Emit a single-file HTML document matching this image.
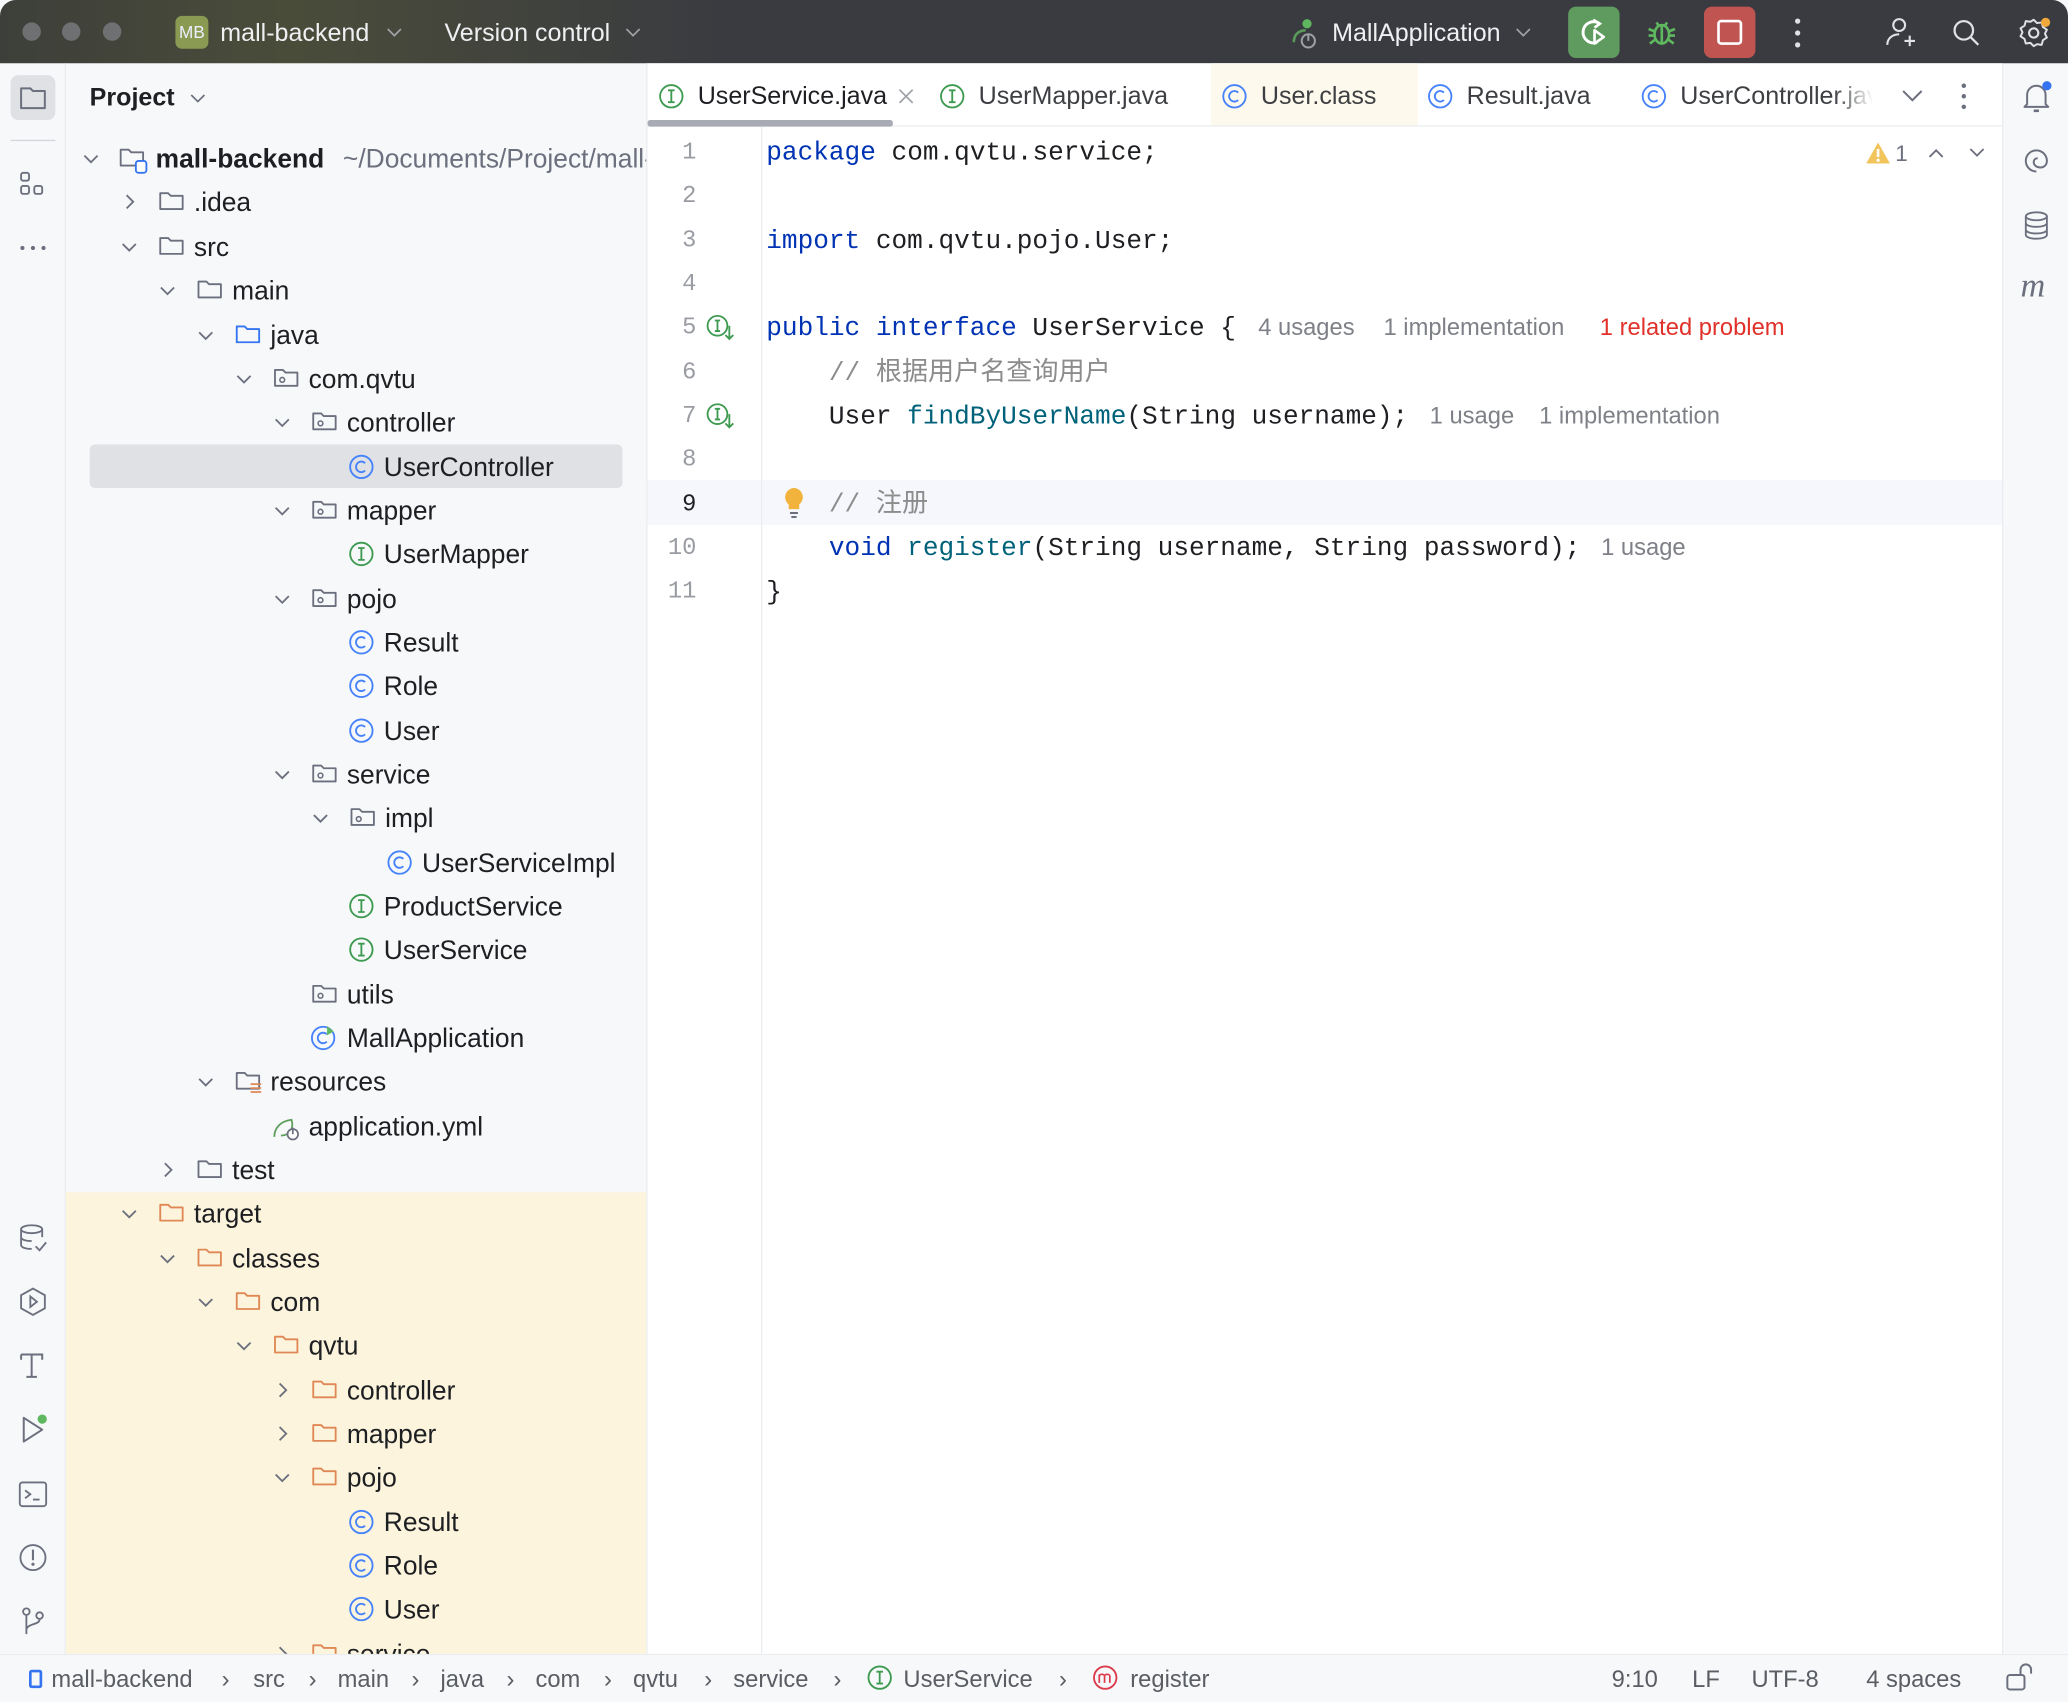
<!DOCTYPE html>
<html><head><meta charset="utf-8"><style>
*{box-sizing:border-box;margin:0;padding:0}
html,body{width:2068px;height:1702px;overflow:hidden;background:#f7f8fa}
#w{position:absolute;left:0;top:0;width:1568px;height:1290px;overflow:hidden;transform:scale(1.31888);transform-origin:0 0;font-family:"Liberation Sans","Noto Sans CJK SC",sans-serif;color:#1e1f22}
.a{position:absolute}
#tb{left:0;top:0;width:1568px;height:48px;background:linear-gradient(90deg,#3d3f3a 0%,#4a4c3a 14%,#393b40 35%,#393b40 100%);border-radius:12px 12px 0 0}
.tl{width:14px;height:14px;border-radius:50%;background:#6e7072;top:17px}
.tt{color:#eef0f2;font-size:19px;top:15px}
.r{position:absolute;height:33px;left:0;width:440px;font-size:20px;line-height:33px;white-space:nowrap}
.r svg{position:absolute;top:7px}
.r span{position:absolute;top:2px}
.code{font-family:"Liberation Mono","Noto Sans CJK SC",monospace;font-size:19.8px;white-space:pre;line-height:33px}
.ln{position:absolute;left:491px;width:37px;text-align:right;font-family:"Liberation Mono",monospace;font-size:18px;color:#9a9ca3;line-height:33px}
.kw{color:#0033b3}.mt{color:#00627a}.cm{color:#8c8c8c}
.h{position:absolute;font-family:"Liberation Sans",sans-serif;font-size:18px;color:#7e8087;white-space:nowrap}
.tab{top:63px;font-size:19px;color:#3d3f43;white-space:nowrap}
.sb{top:1263px;font-size:18px;color:#5a5d63;white-space:nowrap}
.li{left:13px;width:24px;height:24px}
</style></head><body><div id="w">
<svg width="0" height="0" style="position:absolute"><defs>
<g id="fo"><path d="M1.5 3.5h6l2 2h9v10h-17z" fill="none" stroke="#6c707e" stroke-width="1.4" stroke-linejoin="round"/></g>
<g id="fb"><path d="M1.5 3.5h6l2 2h9v10h-17z" fill="none" stroke="#3574f0" stroke-width="1.4" stroke-linejoin="round"/></g>
<g id="fy"><path d="M1.5 3.5h6l2 2h9v10h-17z" fill="none" stroke="#e08855" stroke-width="1.4" stroke-linejoin="round"/></g>
<g id="pk"><path d="M1.5 3.5h6l2 2h9v10h-17z" fill="none" stroke="#6c707e" stroke-width="1.4" stroke-linejoin="round"/><circle cx="7" cy="11" r="1.8" fill="none" stroke="#6c707e" stroke-width="1.2"/></g>
<g id="cc"><circle cx="10" cy="10" r="8.5" fill="none" stroke="#4682fa" stroke-width="1.4"/><path d="M12.8 7.2a4 4 0 1 0 0 5.6" fill="none" stroke="#4682fa" stroke-width="1.4"/></g>
<g id="ii"><circle cx="10" cy="10" r="8.5" fill="none" stroke="#3d9a50" stroke-width="1.4"/><path d="M7.5 5.5h5M10 5.5v9M7.5 14.5h5" fill="none" stroke="#3d9a50" stroke-width="1.4"/></g>
<g id="cd"><path d="M5 8l5 5 5-5" fill="none" stroke="#6c707e" stroke-width="1.4"/></g>
<g id="cr"><path d="M8 5l5 5-5 5" fill="none" stroke="#6c707e" stroke-width="1.4"/></g>
</defs></svg>

<div id="tb" class="a">
<div class="a tl" style="left:17px"></div><div class="a tl" style="left:47px"></div><div class="a tl" style="left:78px"></div>
<div class="a" style="left:133px;top:12px;width:25px;height:25px;border-radius:5px;background:#8b9a52;color:#eef;font-size:13px;line-height:25px;text-align:center">MB</div>
<div class="a tt" style="left:167px">mall-backend</div>
<svg class="a" style="left:292px;top:17px" width="14" height="14"><path d="M2 5l5 5 5-5" fill="none" stroke="#9ea1a6" stroke-width="1.3"/></svg>
<div class="a tt" style="left:337px">Version control</div>
<svg class="a" style="left:473px;top:17px" width="14" height="14"><path d="M2 5l5 5 5-5" fill="none" stroke="#9ea1a6" stroke-width="1.3"/></svg>
<svg class="a" style="left:976px;top:12px" width="28" height="26"><path d="M5 20c0-6 4-9 9-9" fill="none" stroke="#5a9a5a" stroke-width="2"/><circle cx="15" cy="6" r="3.5" fill="#5fb85f"/><circle cx="16" cy="19" r="5" fill="none" stroke="#9ea1a6" stroke-width="1.5"/><path d="M16 14v5" stroke="#9ea1a6" stroke-width="1.5"/></svg>
<div class="a tt" style="left:1010px">MallApplication</div>
<svg class="a" style="left:1148px;top:17px" width="14" height="14"><path d="M2 5l5 5 5-5" fill="none" stroke="#9ea1a6" stroke-width="1.3"/></svg>
<div class="a" style="left:1189px;top:5px;width:39px;height:39px;border-radius:6px;background:#5f9b5f"></div>
<svg class="a" style="left:1195px;top:11px" width="28" height="28"><path d="M18 7a8 8 0 1 0 -2 14" fill="none" stroke="#fff" stroke-width="2.2"/><path d="M13 4l5 3-4 3" fill="none" stroke="#fff" stroke-width="2"/><path d="M14 12l7 5-7 5z" fill="none" stroke="#fff" stroke-width="2" stroke-linejoin="round"/></svg>
<svg class="a" style="left:1247px;top:11px" width="26" height="26"><ellipse cx="13" cy="15" rx="5.5" ry="7" fill="none" stroke="#5fb85f" stroke-width="2"/><path d="M13 8v14M3 11l5 2M23 11l-5 2M3 16h4M23 16h-4M4 22l4-3M22 22l-4-3M9 6l2 3M17 6l-2 3" stroke="#5fb85f" stroke-width="2" fill="none"/></svg>
<div class="a" style="left:1292px;top:5px;width:39px;height:39px;border-radius:6px;background:#c05450"></div>
<div class="a" style="left:1302px;top:15px;width:19px;height:19px;border:2.5px solid #fff;border-radius:3px"></div>
<svg class="a" style="left:1356px;top:12px" width="14" height="26"><circle cx="7" cy="4" r="2" fill="#dfe1e5"/><circle cx="7" cy="13" r="2" fill="#dfe1e5"/><circle cx="7" cy="22" r="2" fill="#dfe1e5"/></svg>
<svg class="a" style="left:1428px;top:12px" width="26" height="26"><circle cx="12" cy="7" r="4.5" fill="none" stroke="#dfe1e5" stroke-width="1.6"/><path d="M3 22c0-5 4-8 9-8M16 19h8M20 15v8" fill="none" stroke="#dfe1e5" stroke-width="1.6"/></svg>
<svg class="a" style="left:1479px;top:13px" width="24" height="24"><circle cx="10" cy="10" r="7" fill="none" stroke="#dfe1e5" stroke-width="1.7"/><path d="M15 15l6 6" stroke="#dfe1e5" stroke-width="1.7"/></svg>
<svg class="a" style="left:1530px;top:12px" width="26" height="26"><circle cx="12" cy="13" r="3.5" fill="none" stroke="#dfe1e5" stroke-width="1.6"/><path d="M12 3l2.5 2.5 3.5-.5 1 3.5 3 2-1.5 3 1.5 3-3 2-1 3.5-3.5-.5L12 23l-2.5-2.5-3.5.5-1-3.5-3-2 1.5-3-1.5-3 3-2 1-3.5 3.5.5z" fill="none" stroke="#dfe1e5" stroke-width="1.5" stroke-linejoin="round"/><circle cx="21" cy="5" r="3.5" fill="#f2a93b"/></svg>
</div>

<!-- left toolbar -->
<div class="a" style="left:49px;top:48px;width:1px;height:1206px;background:#ebecf0"></div>
<div class="a" style="left:8px;top:57px;width:34px;height:34px;border-radius:6px;background:#dfe1e5"></div>
<svg class="a" style="left:14px;top:63px" width="22" height="22"><path d="M2 4h7l2 2h9v13H2z" fill="none" stroke="#6c707e" stroke-width="1.5" stroke-linejoin="round"/></svg>
<div class="a" style="left:8px;top:106px;width:34px;height:1px;background:#d3d5db"></div>
<svg class="a li" style="top:128px"><rect x="3" y="3" width="6" height="6" rx="1.5" fill="none" stroke="#6c707e" stroke-width="1.4"/><rect x="3" y="13" width="6" height="6" rx="1.5" fill="none" stroke="#6c707e" stroke-width="1.4"/><rect x="13" y="13" width="6" height="6" rx="1.5" fill="none" stroke="#6c707e" stroke-width="1.4"/></svg>
<svg class="a li" style="top:176px"><circle cx="4" cy="12" r="1.6" fill="#6c707e"/><circle cx="12" cy="12" r="1.6" fill="#6c707e"/><circle cx="20" cy="12" r="1.6" fill="#6c707e"/></svg>
<svg class="a li" style="top:927px"><ellipse cx="11" cy="5" rx="8" ry="3" fill="none" stroke="#6c707e" stroke-width="1.4"/><path d="M3 5v12c0 2 4 3 8 3M19 5v6M3 11c0 2 4 3 8 3M14 18l3 3 5-6" fill="none" stroke="#6c707e" stroke-width="1.4"/></svg>
<svg class="a li" style="top:975px"><path d="M12 2l9 5v10l-9 5-9-5V7z" fill="none" stroke="#6c707e" stroke-width="1.4"/><path d="M10 8l5 4-5 4z" fill="none" stroke="#6c707e" stroke-width="1.4"/></svg>
<svg class="a li" style="top:1023px"><path d="M3 4h16v4M11 4v17M7 21h8M3 4v4" fill="none" stroke="#6c707e" stroke-width="1.5"/></svg>
<svg class="a li" style="top:1072px"><path d="M5 3l14 9-14 9z" fill="none" stroke="#6c707e" stroke-width="1.5" stroke-linejoin="round"/><circle cx="19" cy="4" r="3.5" fill="#5fb85f"/></svg>
<svg class="a li" style="top:1121px"><rect x="2" y="3" width="20" height="18" rx="2" fill="none" stroke="#6c707e" stroke-width="1.4"/><path d="M6 9l4 3-4 3M12 16h5" fill="none" stroke="#6c707e" stroke-width="1.4"/></svg>
<svg class="a li" style="top:1169px"><circle cx="12" cy="12" r="9.5" fill="none" stroke="#6c707e" stroke-width="1.4"/><path d="M12 6v8" stroke="#6c707e" stroke-width="1.6"/><circle cx="12" cy="17" r="1.2" fill="#6c707e"/></svg>
<svg class="a li" style="top:1217px"><circle cx="7" cy="5" r="2.5" fill="none" stroke="#6c707e" stroke-width="1.4"/><circle cx="17" cy="8" r="2.5" fill="none" stroke="#6c707e" stroke-width="1.4"/><path d="M7 8v14M17 11c0 4-10 3-10 8" fill="none" stroke="#6c707e" stroke-width="1.4"/></svg>

<!-- project panel -->
<div class="a" style="left:68px;top:64px;font-size:19px;font-weight:bold">Project</div>
<svg class="a" style="left:143px;top:67px" width="14" height="14"><path d="M2 5l5 5 5-5" fill="none" stroke="#6c707e" stroke-width="1.3"/></svg>
<div class="a" style="left:490px;top:48px;width:1px;height:1206px;background:#ebecf0"></div>
<div class="a" style="left:50px;top:904px;width:440px;height:350px;background:#fcf4dc"></div>
<div class="a" style="left:68px;top:337px;width:404px;height:33px;border-radius:4px;background:#dfe1e5"></div>
<div class="a" style="left:50px;top:100px;width:440px;height:1154px;overflow:hidden">
<div style="position:absolute;left:-50px;top:-100px;width:490px;height:1400px">
<div class="r" style="top:103px"><svg class="a" style="left:59px" width="20" height="20"><use href="#cd"/></svg><svg class="a" style="left:90px" width="22" height="22"><use href="#fo"/><rect x="13" y="12" width="8" height="9" rx="2" fill="#fff" stroke="#3574f0" stroke-width="1.4"/></svg><span style="left:118px;font-weight:bold">mall-backend</span><span style="left:260px;color:#6c707e">~/Documents/Project/mall-backend</span></div>
<div class="r" style="top:136px"><svg style="left:88px" width="20" height="20"><use href="#cr"/></svg><svg style="left:120px" width="21" height="20"><use href="#fo"/></svg><span style="left:147px">.idea</span></div>
<div class="r" style="top:170px"><svg style="left:88px" width="20" height="20"><use href="#cd"/></svg><svg style="left:120px" width="21" height="20"><use href="#fo"/></svg><span style="left:147px">src</span></div>
<div class="r" style="top:203px"><svg style="left:117px" width="20" height="20"><use href="#cd"/></svg><svg style="left:149px" width="21" height="20"><use href="#fo"/></svg><span style="left:176px">main</span></div>
<div class="r" style="top:237px"><svg style="left:146px" width="20" height="20"><use href="#cd"/></svg><svg style="left:178px" width="21" height="20"><use href="#fb"/></svg><span style="left:205px">java</span></div>
<div class="r" style="top:270px"><svg style="left:175px" width="20" height="20"><use href="#cd"/></svg><svg style="left:207px" width="21" height="20"><use href="#pk"/></svg><span style="left:234px">com.qvtu</span></div>
<div class="r" style="top:303px"><svg style="left:204px" width="20" height="20"><use href="#cd"/></svg><svg style="left:236px" width="21" height="20"><use href="#pk"/></svg><span style="left:263px">controller</span></div>
<div class="r" style="top:337px"><svg style="left:264px" width="20" height="20"><use href="#cc"/></svg><span style="left:291px">UserController</span></div>
<div class="r" style="top:370px"><svg style="left:204px" width="20" height="20"><use href="#cd"/></svg><svg style="left:236px" width="21" height="20"><use href="#pk"/></svg><span style="left:263px">mapper</span></div>
<div class="r" style="top:403px"><svg style="left:264px" width="20" height="20"><use href="#ii"/></svg><span style="left:291px">UserMapper</span></div>
<div class="r" style="top:437px"><svg style="left:204px" width="20" height="20"><use href="#cd"/></svg><svg style="left:236px" width="21" height="20"><use href="#pk"/></svg><span style="left:263px">pojo</span></div>
<div class="r" style="top:470px"><svg style="left:264px" width="20" height="20"><use href="#cc"/></svg><span style="left:291px">Result</span></div>
<div class="r" style="top:503px"><svg style="left:264px" width="20" height="20"><use href="#cc"/></svg><span style="left:291px">Role</span></div>
<div class="r" style="top:537px"><svg style="left:264px" width="20" height="20"><use href="#cc"/></svg><span style="left:291px">User</span></div>
<div class="r" style="top:570px"><svg style="left:204px" width="20" height="20"><use href="#cd"/></svg><svg style="left:236px" width="21" height="20"><use href="#pk"/></svg><span style="left:263px">service</span></div>
<div class="r" style="top:603px"><svg style="left:233px" width="20" height="20"><use href="#cd"/></svg><svg style="left:265px" width="21" height="20"><use href="#pk"/></svg><span style="left:292px">impl</span></div>
<div class="r" style="top:637px"><svg style="left:293px" width="20" height="20"><use href="#cc"/></svg><span style="left:320px">UserServiceImpl</span></div>
<div class="r" style="top:670px"><svg style="left:264px" width="20" height="20"><use href="#ii"/></svg><span style="left:291px">ProductService</span></div>
<div class="r" style="top:703px"><svg style="left:264px" width="20" height="20"><use href="#ii"/></svg><span style="left:291px">UserService</span></div>
<div class="r" style="top:737px"><svg style="left:236px" width="21" height="20"><use href="#pk"/></svg><span style="left:263px">utils</span></div>
<div class="r" style="top:770px"><svg style="left:235px" width="22" height="22"><use href="#cc"/><path d="M13 1v7l5-3z" fill="#5fb85f"/></svg><span style="left:263px">MallApplication</span></div>
<div class="r" style="top:803px"><svg style="left:146px" width="20" height="20"><use href="#cd"/></svg><svg style="left:178px" width="22" height="20"><use href="#fo"/><path d="M12 12h8M12 15h8M12 18h8" stroke="#e08855" stroke-width="1.3"/></svg><span style="left:205px">resources</span></div>
<div class="r" style="top:837px"><svg style="left:205px" width="24" height="22"><path d="M3 18c0-7 5-12 13-13 2 6-1 12-8 12" fill="none" stroke="#5fa05f" stroke-width="1.4"/><circle cx="17" cy="16" r="4" fill="#fff" stroke="#6c707e" stroke-width="1.3"/><path d="M17 11v5" stroke="#6c707e" stroke-width="1.3"/></svg><span style="left:234px">application.yml</span></div>
<div class="r" style="top:870px"><svg style="left:117px" width="20" height="20"><use href="#cr"/></svg><svg style="left:149px" width="21" height="20"><use href="#fo"/></svg><span style="left:176px">test</span></div>
<div class="r" style="top:903px"><svg style="left:88px" width="20" height="20"><use href="#cd"/></svg><svg style="left:120px" width="21" height="20"><use href="#fy"/></svg><span style="left:147px">target</span></div>
<div class="r" style="top:937px"><svg style="left:117px" width="20" height="20"><use href="#cd"/></svg><svg style="left:149px" width="21" height="20"><use href="#fy"/></svg><span style="left:176px">classes</span></div>
<div class="r" style="top:970px"><svg style="left:146px" width="20" height="20"><use href="#cd"/></svg><svg style="left:178px" width="21" height="20"><use href="#fy"/></svg><span style="left:205px">com</span></div>
<div class="r" style="top:1003px"><svg style="left:175px" width="20" height="20"><use href="#cd"/></svg><svg style="left:207px" width="21" height="20"><use href="#fy"/></svg><span style="left:234px">qvtu</span></div>
<div class="r" style="top:1037px"><svg style="left:204px" width="20" height="20"><use href="#cr"/></svg><svg style="left:236px" width="21" height="20"><use href="#fy"/></svg><span style="left:263px">controller</span></div>
<div class="r" style="top:1070px"><svg style="left:204px" width="20" height="20"><use href="#cr"/></svg><svg style="left:236px" width="21" height="20"><use href="#fy"/></svg><span style="left:263px">mapper</span></div>
<div class="r" style="top:1103px"><svg style="left:204px" width="20" height="20"><use href="#cd"/></svg><svg style="left:236px" width="21" height="20"><use href="#fy"/></svg><span style="left:263px">pojo</span></div>
<div class="r" style="top:1137px"><svg style="left:264px" width="20" height="20"><use href="#cc"/></svg><span style="left:291px">Result</span></div>
<div class="r" style="top:1170px"><svg style="left:264px" width="20" height="20"><use href="#cc"/></svg><span style="left:291px">Role</span></div>
<div class="r" style="top:1203px"><svg style="left:264px" width="20" height="20"><use href="#cc"/></svg><span style="left:291px">User</span></div>
<div class="r" style="top:1237px"><svg style="left:204px" width="20" height="20"><use href="#cr"/></svg><svg style="left:236px" width="21" height="20"><use href="#fy"/></svg><span style="left:263px">service</span></div>
</div></div>

<!-- editor -->
<div class="a" style="left:491px;top:48px;width:1027px;height:1206px;background:#fff"></div>
<div class="a" style="left:918px;top:48px;width:157px;height:47px;background:#fdf9ec"></div>
<div class="a" style="left:491px;top:95px;width:1027px;height:1px;background:#ebecf0"></div>
<div class="a" style="left:491px;top:91px;width:186px;height:5px;border-radius:2px;background:#a8abb3"></div>
<svg class="a" style="left:499px;top:63px" width="20" height="20"><use href="#ii"/></svg><div class="a tab" style="left:529px;color:#1e1f22">UserService.java</div>
<svg class="a" style="left:680px;top:66px" width="14" height="14"><path d="M2 2l10 10M12 2L2 12" stroke="#9ea1a6" stroke-width="1.3"/></svg>
<svg class="a" style="left:712px;top:63px" width="20" height="20"><use href="#ii"/></svg><div class="a tab" style="left:742px">UserMapper.java</div>
<svg class="a" style="left:926px;top:63px" width="20" height="20"><use href="#cc"/></svg><div class="a tab" style="left:956px">User.class</div>
<svg class="a" style="left:1082px;top:63px" width="20" height="20"><use href="#cc"/></svg><div class="a tab" style="left:1112px">Result.java</div>
<svg class="a" style="left:1244px;top:63px" width="20" height="20"><use href="#cc"/></svg><div class="a tab" style="left:1274px;width:146px;overflow:hidden;-webkit-mask-image:linear-gradient(90deg,#000 80%,transparent)">UserController.java</div>
<svg class="a" style="left:1441px;top:65px" width="18" height="16"><path d="M2 4l7 7 7-7" fill="none" stroke="#6c707e" stroke-width="1.5"/></svg>
<svg class="a" style="left:1483px;top:62px" width="12" height="22"><circle cx="6" cy="3" r="1.7" fill="#6c707e"/><circle cx="6" cy="11" r="1.7" fill="#6c707e"/><circle cx="6" cy="19" r="1.7" fill="#6c707e"/></svg>

<div class="a" style="left:491px;top:364px;width:1027px;height:34px;background:#f5f7fd"></div>
<div class="a" style="left:577px;top:96px;width:1px;height:1158px;background:#ebecf0"></div>
<div class="ln" style="top:100px">1</div><div class="ln" style="top:133px">2</div><div class="ln" style="top:167px">3</div><div class="ln" style="top:200px">4</div><div class="ln" style="top:233px">5</div><div class="ln" style="top:267px">6</div><div class="ln" style="top:300px">7</div><div class="ln" style="top:333px">8</div><div class="ln" style="top:367px;color:#1e1f22">9</div><div class="ln" style="top:400px">10</div><div class="ln" style="top:433px">11</div>
<svg class="a" style="left:535px;top:238px" width="24" height="22"><circle cx="9" cy="9" r="7.5" fill="none" stroke="#3d9a50" stroke-width="1.4"/><path d="M7 5h4M9 5v8M7 13h4M18 9v10M15 16l3 3 3-3" fill="none" stroke="#3d9a50" stroke-width="1.4"/></svg>
<svg class="a" style="left:535px;top:305px" width="24" height="22"><circle cx="9" cy="9" r="7.5" fill="none" stroke="#3d9a50" stroke-width="1.4"/><path d="M7 5h4M9 5v8M7 13h4M18 9v10M15 16l3 3 3-3" fill="none" stroke="#3d9a50" stroke-width="1.4"/></svg>
<svg class="a" style="left:593px;top:369px" width="18" height="26"><path d="M9 1a7 7 0 0 0-4 12.5V17h8v-3.5A7 7 0 0 0 9 1z" fill="#f2b33d"/><path d="M6 20h6M7 23h4" stroke="#6c707e" stroke-width="1.5"/></svg>

<div class="a code" style="left:581px;top:100px"><span class="kw">package</span> com.qvtu.service;</div>
<div class="a code" style="left:581px;top:167px"><span class="kw">import</span> com.qvtu.pojo.User;</div>
<div class="a code" style="left:581px;top:233px"><span class="kw">public interface</span> UserService {</div>
<div class="h" style="left:954px;top:238px">4 usages</div><div class="h" style="left:1049px;top:238px">1 implementation</div><div class="h" style="left:1213px;top:238px;color:#e0312a">1 related problem</div>
<div class="a code cm" style="left:581px;top:267px">    // 根据用户名查询用户</div>
<div class="a code" style="left:581px;top:300px">    User <span class="mt">findByUserName</span>(String username);</div>
<div class="h" style="left:1084px;top:305px">1 usage</div><div class="h" style="left:1167px;top:305px">1 implementation</div>
<div class="a code cm" style="left:581px;top:367px">    // 注册</div>
<div class="a code" style="left:581px;top:400px">    <span class="kw">void</span> <span class="mt">register</span>(String username, String password);</div>
<div class="h" style="left:1214px;top:405px">1 usage</div>
<div class="a code" style="left:581px;top:433px">}</div>
<svg class="a" style="left:1413px;top:106px" width="22" height="20"><path d="M11 2l9 16H2z" fill="#f2c55c"/><path d="M11 7v6" stroke="#fff" stroke-width="2"/><circle cx="11" cy="15.5" r="1.2" fill="#fff"/></svg>
<div class="a" style="left:1437px;top:107px;font-size:17px;color:#6c707e">1</div>
<svg class="a" style="left:1460px;top:108px" width="16" height="16"><path d="M3 11l5-5 5 5" fill="none" stroke="#6c707e" stroke-width="1.4"/></svg>
<svg class="a" style="left:1491px;top:108px" width="16" height="16"><path d="M3 5l5 5 5-5" fill="none" stroke="#6c707e" stroke-width="1.4"/></svg>

<!-- right toolbar -->
<div class="a" style="left:1518px;top:48px;width:1px;height:1206px;background:#ebecf0"></div>
<svg class="a" style="left:1531px;top:60px" width="26" height="28"><path d="M6 19V12a7 7 0 0 1 14 0v7l2 2H4z" fill="none" stroke="#6c707e" stroke-width="1.5" stroke-linejoin="round"/><path d="M11 24h4" stroke="#6c707e" stroke-width="2"/><circle cx="21" cy="5" r="3.5" fill="#3574f0"/></svg>
<svg class="a" style="left:1532px;top:110px" width="24" height="24"><path d="M12 20a8 8 0 1 1 8-8c0 3-2 5-5 5s-5-2-5-4 1.5-3 3-3" fill="none" stroke="#6c707e" stroke-width="1.5"/></svg>
<svg class="a" style="left:1532px;top:159px" width="24" height="24"><ellipse cx="12" cy="5" rx="8" ry="3" fill="none" stroke="#6c707e" stroke-width="1.4"/><path d="M4 5v14c0 2 4 3 8 3s8-1 8-3V5M4 10c0 2 4 3 8 3s8-1 8-3M4 15c0 2 4 3 8 3s8-1 8-3" fill="none" stroke="#6c707e" stroke-width="1.4"/></svg>
<div class="a" style="left:1532px;top:202px;font-size:26px;font-style:italic;font-family:'Liberation Serif',serif;color:#6c707e">m</div>

<!-- status bar -->
<div class="a" style="left:0;top:1254px;width:1568px;height:37px;background:#f7f8fa;border-top:1px solid #ebecf0;border-radius:0 0 12px 12px"></div>
<div class="a" style="left:22px;top:1266px;width:10px;height:14px;border:2px solid #3574f0;border-radius:2px"></div>
<div class="a sb" style="left:39px">mall-backend</div><div class="a sb" style="left:168px">›</div>
<div class="a sb" style="left:192px">src</div><div class="a sb" style="left:234px">›</div>
<div class="a sb" style="left:256px">main</div><div class="a sb" style="left:312px">›</div>
<div class="a sb" style="left:334px">java</div><div class="a sb" style="left:384px">›</div>
<div class="a sb" style="left:406px">com</div><div class="a sb" style="left:458px">›</div>
<div class="a sb" style="left:480px">qvtu</div><div class="a sb" style="left:534px">›</div>
<div class="a sb" style="left:556px">service</div><div class="a sb" style="left:632px">›</div>
<svg class="a" style="left:657px;top:1262px" width="20" height="20"><use href="#ii"/></svg><div class="a sb" style="left:685px">UserService</div><div class="a sb" style="left:803px">›</div>
<svg class="a" style="left:828px;top:1262px" width="22" height="22"><circle cx="10" cy="10" r="8.5" fill="none" stroke="#db3b4b" stroke-width="1.4"/><path d="M5.5 14V7.5M5.5 9c0-2 4-2 4 0v5M9.5 9c0-2 4-2 4 0v5" fill="none" stroke="#db3b4b" stroke-width="1.3"/></svg>
<div class="a sb" style="left:857px">register</div>
<div class="a sb" style="left:1222px">9:10</div><div class="a sb" style="left:1283px">LF</div><div class="a sb" style="left:1328px">UTF-8</div><div class="a sb" style="left:1415px">4 spaces</div>
<svg class="a" style="left:1520px;top:1260px" width="22" height="24"><rect x="2" y="10" width="13" height="11" rx="2" fill="none" stroke="#6c707e" stroke-width="1.5"/><path d="M12 10V6a4 4 0 0 1 8 0v3" fill="none" stroke="#6c707e" stroke-width="1.5"/></svg>
</div></body></html>
